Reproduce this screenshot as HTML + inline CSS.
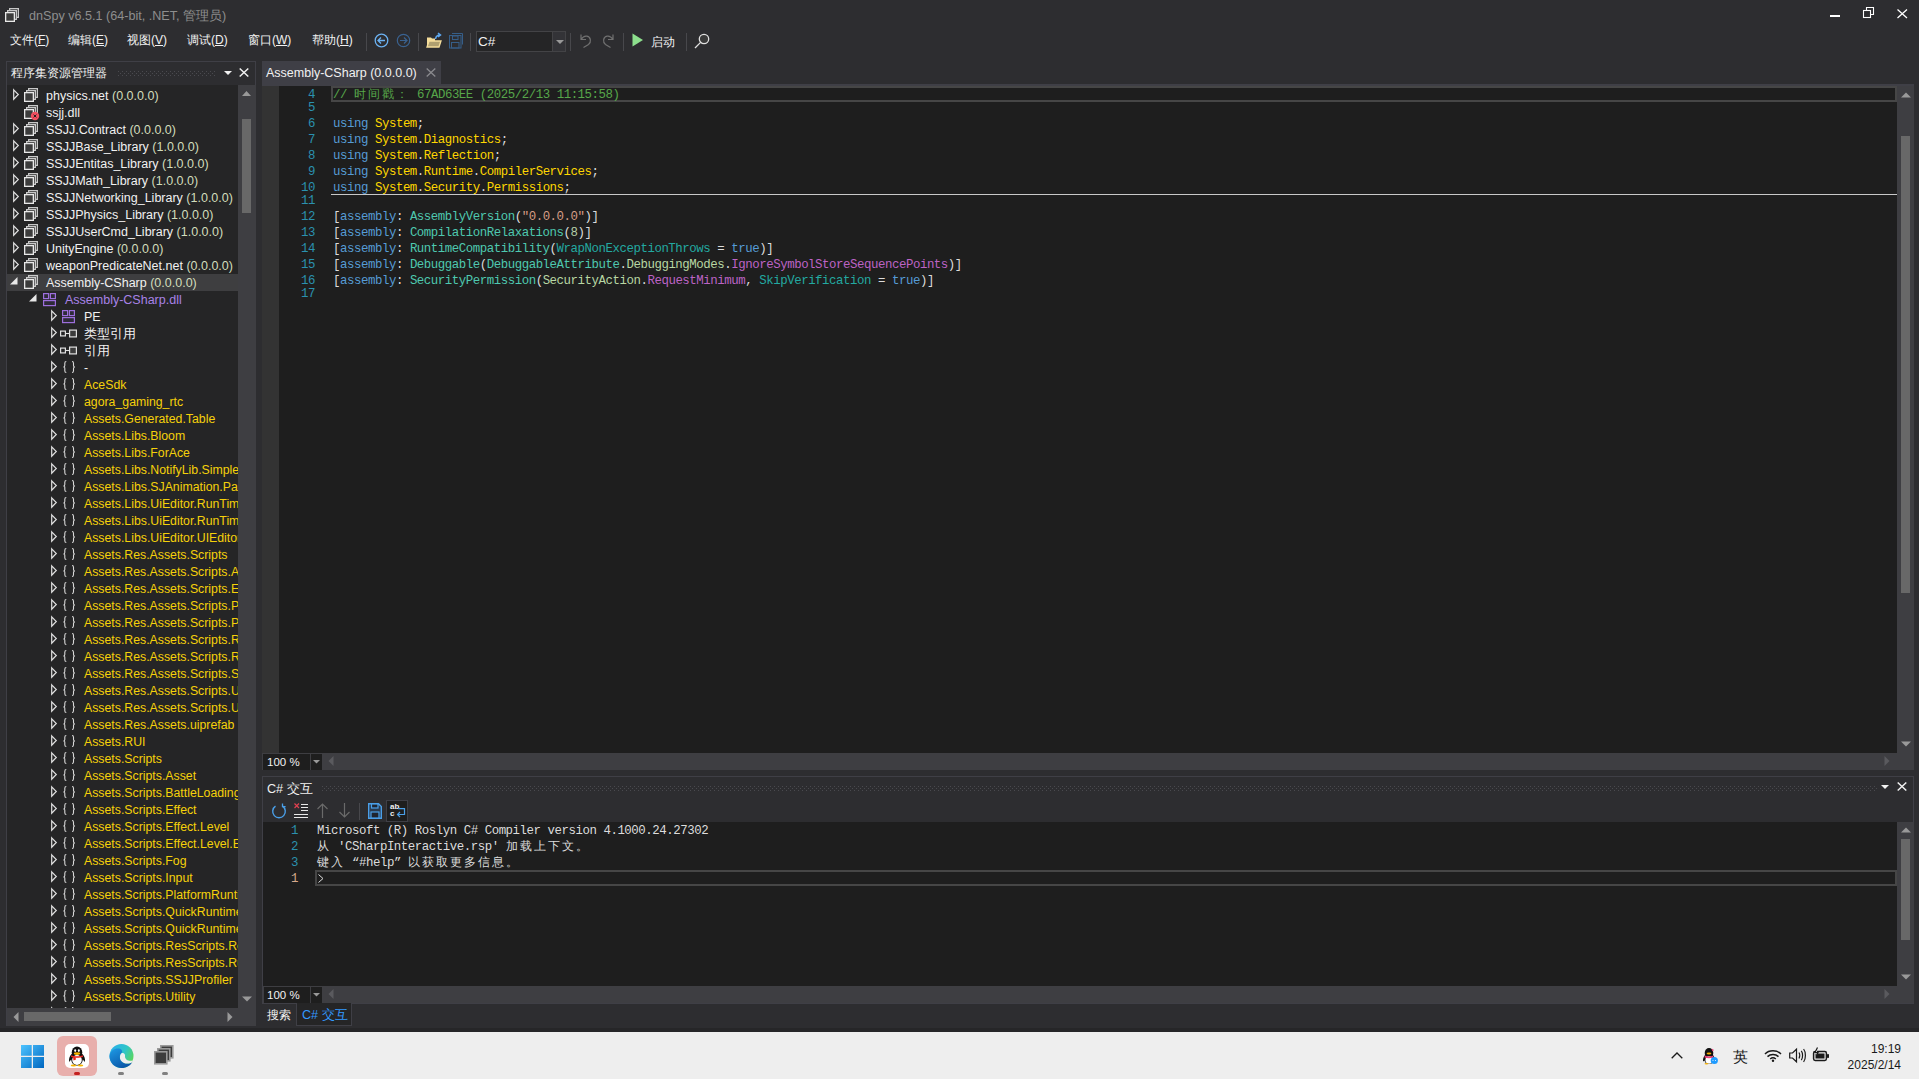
<!DOCTYPE html><html><head><meta charset="utf-8"><style>
*{margin:0;padding:0;box-sizing:border-box}
html,body{width:1919px;height:1079px;overflow:hidden;background:#2D2D30;font-family:"Liberation Sans",sans-serif;color:#F1F1F1}
.a{position:absolute}
.t{position:absolute;white-space:nowrap;font-size:12.4px;line-height:17px}
.m{font-family:"Liberation Mono",monospace;font-size:12.4px;letter-spacing:-0.45px;white-space:pre;position:absolute;line-height:16px;color:#DCDCDC}
.kw{color:#569CD6}.ns{color:#FFD700}.ty{color:#4EC9B0}.en{color:#B8D7A3}.lf{color:#BD63C5}.pr{color:#23A9A1}.st{color:#D69D85}.nm{color:#B5CEA8}.cm{color:#57A64A}
.ln{color:#2B91AF;position:absolute;font-family:"Liberation Mono",monospace;font-size:12.4px;letter-spacing:-0.45px;white-space:pre;line-height:16px;text-align:right}
.sb{background:#3E3E42}
.th{background:#686868}
svg{position:absolute;overflow:visible}
.tr{position:absolute;left:0;width:231px;height:17px}
</style></head><body>
<svg style="left:5px;top:8px;" width="14" height="14" viewBox="0 0 14 14"><rect x="4.65" y="0.65" width="8.7" height="8.7" fill="#2D2D30" stroke="#C8C8C8" stroke-width="1.3"/><rect x="2.65" y="2.65" width="8.7" height="8.7" fill="#2D2D30" stroke="#C8C8C8" stroke-width="1.3"/><rect x="0.65" y="4.65" width="8.7" height="8.7" fill="#3C3C3C" stroke="#E8E8E8" stroke-width="1.3"/></svg>
<div class="t" style="left:29px;top:7px;font-size:12.6px;color:#8E8E8E;line-height:18px">dnSpy v6.5.1 (64-bit, .NET, 管理员)</div>
<div class="a" style="left:1830px;top:15px;width:10px;height:2px;background:#FFFFFF;"></div>
<svg style="left:1863px;top:7px;" width="12" height="12" viewBox="0 0 12 12"><rect x="0.5" y="3.5" width="7" height="7" fill="none" stroke="#fff" stroke-width="1.1"/><path d="M3.5,3.5V0.5H10.5V7.5H7.5" fill="none" stroke="#fff" stroke-width="1.1"/></svg>
<svg style="left:1897px;top:9px;" width="11" height="10" viewBox="0 0 11 10"><path d="M0.5,0.5L10,9M10,0.5L0.5,9" stroke="#fff" stroke-width="1.3"/></svg>
<div class="t" style="left:10px;top:32px;font-size:12px;color:#F1F1F1;">文件(<u>F</u>)</div>
<div class="t" style="left:68px;top:32px;font-size:12px;color:#F1F1F1;">编辑(<u>E</u>)</div>
<div class="t" style="left:127px;top:32px;font-size:12px;color:#F1F1F1;">视图(<u>V</u>)</div>
<div class="t" style="left:187px;top:32px;font-size:12px;color:#F1F1F1;">调试(<u>D</u>)</div>
<div class="t" style="left:248px;top:32px;font-size:12px;color:#F1F1F1;">窗口(<u>W</u>)</div>
<div class="t" style="left:312px;top:32px;font-size:12px;color:#F1F1F1;">帮助(<u>H</u>)</div>
<div class="a" style="left:366px;top:33px;width:1px;height:18px;background:#48484C;"></div>
<div class="a" style="left:418px;top:33px;width:1px;height:18px;background:#48484C;"></div>
<div class="a" style="left:470px;top:33px;width:1px;height:18px;background:#48484C;"></div>
<div class="a" style="left:570px;top:33px;width:1px;height:18px;background:#48484C;"></div>
<div class="a" style="left:623px;top:33px;width:1px;height:18px;background:#48484C;"></div>
<div class="a" style="left:686px;top:33px;width:1px;height:18px;background:#48484C;"></div>
<svg style="left:374px;top:33px;" width="15" height="15" viewBox="0 0 15 15"><circle cx="7.5" cy="7.5" r="6.3" fill="none" stroke="#6CB2F2" stroke-width="1.3"/><path d="M4,7.5H11M7,4.5L4,7.5L7,10.5" fill="none" stroke="#6CB2F2" stroke-width="1.3"/></svg>
<svg style="left:396px;top:33px;" width="15" height="15" viewBox="0 0 15 15"><circle cx="7.5" cy="7.5" r="6.2" fill="none" stroke="#3A6290" stroke-width="1.2"/><path d="M4,7.5H11M8,4.5L11,7.5L8,10.5" fill="none" stroke="#3A6290" stroke-width="1.2"/></svg>
<svg style="left:426px;top:32px;" width="16" height="16" viewBox="0 0 16 16"><path d="M1,5.5H5L6,6.5H9V14.5H1Z" fill="#F5DD9A"/><path d="M3,9H15L13,15H1Z" fill="#B0A070" stroke="#F5DD9A" stroke-width="1.3"/><path d="M9.5,7C10,4 11.5,3 14,3M12,1L14.5,3L12,5" fill="none" stroke="#5EA8F0" stroke-width="1.5"/></svg>
<svg style="left:449px;top:33px;" width="15" height="16" viewBox="0 0 15 16"><path d="M3,0.5H13.5V11.5" fill="none" stroke="#365E88" stroke-width="1"/><rect x="0.5" y="2.5" width="11.5" height="12.5" fill="none" stroke="#365E88" stroke-width="1"/><rect x="3.5" y="3" width="5.5" height="3.5" fill="none" stroke="#365E88" stroke-width="1"/><rect x="2.5" y="9.5" width="7.5" height="5.5" fill="none" stroke="#365E88" stroke-width="1"/></svg>
<div class="a" style="left:476px;top:31px;width:90px;height:21px;background:#252526;border:1px solid #434346"></div>
<div class="a" style="left:553px;top:32px;width:12px;height:19px;background:#333337;"></div>
<div class="a" style="left:552px;top:32px;width:1px;height:19px;background:#434346;"></div>
<svg style="left:556px;top:40px;" width="8" height="5" viewBox="0 0 8 5"><path d="M0,0H8L4,4Z" fill="#999"/></svg>
<div class="t" style="left:478px;top:33px;font-size:13.5px;color:#F1F1F1;">C#</div>
<svg style="left:579px;top:33px;" width="14" height="15" viewBox="0 0 14 15"><path d="M2,1.5V6.5H7M2.2,6.3C4,3.5 6,2.7 8,3.2C12,4.2 12.5,9 9.5,11.5L4.5,14.5" fill="none" stroke="#707070" stroke-width="1.2"/></svg>
<svg style="left:601px;top:33px;" width="14" height="15" viewBox="0 0 14 15"><path d="M12,1.5V6.5H7M11.8,6.3C10,3.5 8,2.7 6,3.2C2,4.2 1.5,9 4.5,11.5L9.5,14.5" fill="none" stroke="#707070" stroke-width="1.2"/></svg>
<svg style="left:632px;top:33px;" width="12" height="14" viewBox="0 0 12 14"><path d="M0.5,0.5L11,7L0.5,13.5Z" fill="#8DDF8D"/></svg>
<div class="t" style="left:651px;top:34px;font-size:12.2px;color:#F1F1F1;">启动</div>
<svg style="left:694px;top:33px;" width="16" height="16" viewBox="0 0 16 16"><circle cx="10" cy="6" r="4.7" fill="#3A3A3A" stroke="#E0E0E0" stroke-width="1.3"/><path d="M6.6,9.4L1,15" stroke="#E0E0E0" stroke-width="1.3"/></svg>
<div class="a" style="left:6px;top:61px;width:250px;height:965px;background:#2D2D30;border:1px solid #3F3F46"></div>
<div class="t" style="left:11px;top:65px;font-size:12.2px;color:#F1F1F1;">程序集资源管理器</div>
<svg style="left:118px;top:71px" width="98" height="5"><defs><pattern id="g1" width="4" height="4" patternUnits="userSpaceOnUse"><rect x="0" y="0" width="1" height="1" fill="#4A4A4F"/><rect x="2" y="2" width="1" height="1" fill="#4A4A4F"/></pattern></defs><rect width="98" height="5" fill="url(#g1)"/></svg>
<svg style="left:224px;top:71px;" width="9" height="5" viewBox="0 0 9 5"><path d="M0,0H8L4,4Z" fill="#F1F1F1"/></svg>
<svg style="left:239px;top:68px;" width="10" height="9" viewBox="0 0 10 9"><path d="M0.7,0.5L9.3,8.5M9.3,0.5L0.7,8.5" stroke="#F1F1F1" stroke-width="1.5"/></svg>
<div class="a" style="left:7px;top:85px;width:231px;height:923px;background:#252526;overflow:hidden">
<svg style="left:6px;top:4px;" width="6" height="11" viewBox="0 0 6 11"><path d="M0.7,0.8L5.3,5.5L0.7,10.2Z" fill="none" stroke="#E0E0E0" stroke-width="1.2"/></svg>
<svg style="left:17px;top:3px" width="14" height="14" viewBox="0 0 14 14"><rect x="4.65" y="0.65" width="8.7" height="8.7" fill="#252526" stroke="#C8C8C8" stroke-width="1.3"/><rect x="2.65" y="2.65" width="8.7" height="8.7" fill="#252526" stroke="#C8C8C8" stroke-width="1.3"/><rect x="0.65" y="4.65" width="8.7" height="8.7" fill="#3C3C3C" stroke="#E8E8E8" stroke-width="1.3"/></svg>
<div class="t" style="left:39px;top:3px;color:#F1F1F1;font-size:12.5px">physics.net <span style="color:#D2DDBC">(0.0.0.0)</span></div>
<svg style="left:17px;top:20px" width="14" height="14" viewBox="0 0 14 14"><rect x="4.65" y="0.65" width="8.7" height="8.7" fill="#252526" stroke="#C8C8C8" stroke-width="1.3"/><rect x="2.65" y="2.65" width="8.7" height="8.7" fill="#252526" stroke="#C8C8C8" stroke-width="1.3"/><rect x="0.65" y="4.65" width="8.7" height="8.7" fill="#3C3C3C" stroke="#E8E8E8" stroke-width="1.3"/><circle cx="11" cy="11" r="4.2" fill="#F05060"/><path d="M9.6,9.6L12.4,12.4M12.4,9.6L9.6,12.4" stroke="#222" stroke-width="1"/></svg>
<div class="t" style="left:39px;top:20px;color:#F1F1F1;font-size:12.5px">ssjj.dll</div>
<svg style="left:6px;top:38px;" width="6" height="11" viewBox="0 0 6 11"><path d="M0.7,0.8L5.3,5.5L0.7,10.2Z" fill="none" stroke="#E0E0E0" stroke-width="1.2"/></svg>
<svg style="left:17px;top:37px" width="14" height="14" viewBox="0 0 14 14"><rect x="4.65" y="0.65" width="8.7" height="8.7" fill="#252526" stroke="#C8C8C8" stroke-width="1.3"/><rect x="2.65" y="2.65" width="8.7" height="8.7" fill="#252526" stroke="#C8C8C8" stroke-width="1.3"/><rect x="0.65" y="4.65" width="8.7" height="8.7" fill="#3C3C3C" stroke="#E8E8E8" stroke-width="1.3"/></svg>
<div class="t" style="left:39px;top:37px;color:#F1F1F1;font-size:12.5px">SSJJ.Contract <span style="color:#D2DDBC">(0.0.0.0)</span></div>
<svg style="left:6px;top:55px;" width="6" height="11" viewBox="0 0 6 11"><path d="M0.7,0.8L5.3,5.5L0.7,10.2Z" fill="none" stroke="#E0E0E0" stroke-width="1.2"/></svg>
<svg style="left:17px;top:54px" width="14" height="14" viewBox="0 0 14 14"><rect x="4.65" y="0.65" width="8.7" height="8.7" fill="#252526" stroke="#C8C8C8" stroke-width="1.3"/><rect x="2.65" y="2.65" width="8.7" height="8.7" fill="#252526" stroke="#C8C8C8" stroke-width="1.3"/><rect x="0.65" y="4.65" width="8.7" height="8.7" fill="#3C3C3C" stroke="#E8E8E8" stroke-width="1.3"/></svg>
<div class="t" style="left:39px;top:54px;color:#F1F1F1;font-size:12.5px">SSJJBase_Library <span style="color:#D2DDBC">(1.0.0.0)</span></div>
<svg style="left:6px;top:72px;" width="6" height="11" viewBox="0 0 6 11"><path d="M0.7,0.8L5.3,5.5L0.7,10.2Z" fill="none" stroke="#E0E0E0" stroke-width="1.2"/></svg>
<svg style="left:17px;top:71px" width="14" height="14" viewBox="0 0 14 14"><rect x="4.65" y="0.65" width="8.7" height="8.7" fill="#252526" stroke="#C8C8C8" stroke-width="1.3"/><rect x="2.65" y="2.65" width="8.7" height="8.7" fill="#252526" stroke="#C8C8C8" stroke-width="1.3"/><rect x="0.65" y="4.65" width="8.7" height="8.7" fill="#3C3C3C" stroke="#E8E8E8" stroke-width="1.3"/></svg>
<div class="t" style="left:39px;top:71px;color:#F1F1F1;font-size:12.5px">SSJJEntitas_Library <span style="color:#D2DDBC">(1.0.0.0)</span></div>
<svg style="left:6px;top:89px;" width="6" height="11" viewBox="0 0 6 11"><path d="M0.7,0.8L5.3,5.5L0.7,10.2Z" fill="none" stroke="#E0E0E0" stroke-width="1.2"/></svg>
<svg style="left:17px;top:88px" width="14" height="14" viewBox="0 0 14 14"><rect x="4.65" y="0.65" width="8.7" height="8.7" fill="#252526" stroke="#C8C8C8" stroke-width="1.3"/><rect x="2.65" y="2.65" width="8.7" height="8.7" fill="#252526" stroke="#C8C8C8" stroke-width="1.3"/><rect x="0.65" y="4.65" width="8.7" height="8.7" fill="#3C3C3C" stroke="#E8E8E8" stroke-width="1.3"/></svg>
<div class="t" style="left:39px;top:88px;color:#F1F1F1;font-size:12.5px">SSJJMath_Library <span style="color:#D2DDBC">(1.0.0.0)</span></div>
<svg style="left:6px;top:106px;" width="6" height="11" viewBox="0 0 6 11"><path d="M0.7,0.8L5.3,5.5L0.7,10.2Z" fill="none" stroke="#E0E0E0" stroke-width="1.2"/></svg>
<svg style="left:17px;top:105px" width="14" height="14" viewBox="0 0 14 14"><rect x="4.65" y="0.65" width="8.7" height="8.7" fill="#252526" stroke="#C8C8C8" stroke-width="1.3"/><rect x="2.65" y="2.65" width="8.7" height="8.7" fill="#252526" stroke="#C8C8C8" stroke-width="1.3"/><rect x="0.65" y="4.65" width="8.7" height="8.7" fill="#3C3C3C" stroke="#E8E8E8" stroke-width="1.3"/></svg>
<div class="t" style="left:39px;top:105px;color:#F1F1F1;font-size:12.5px">SSJJNetworking_Library <span style="color:#D2DDBC">(1.0.0.0)</span></div>
<svg style="left:6px;top:123px;" width="6" height="11" viewBox="0 0 6 11"><path d="M0.7,0.8L5.3,5.5L0.7,10.2Z" fill="none" stroke="#E0E0E0" stroke-width="1.2"/></svg>
<svg style="left:17px;top:122px" width="14" height="14" viewBox="0 0 14 14"><rect x="4.65" y="0.65" width="8.7" height="8.7" fill="#252526" stroke="#C8C8C8" stroke-width="1.3"/><rect x="2.65" y="2.65" width="8.7" height="8.7" fill="#252526" stroke="#C8C8C8" stroke-width="1.3"/><rect x="0.65" y="4.65" width="8.7" height="8.7" fill="#3C3C3C" stroke="#E8E8E8" stroke-width="1.3"/></svg>
<div class="t" style="left:39px;top:122px;color:#F1F1F1;font-size:12.5px">SSJJPhysics_Library <span style="color:#D2DDBC">(1.0.0.0)</span></div>
<svg style="left:6px;top:140px;" width="6" height="11" viewBox="0 0 6 11"><path d="M0.7,0.8L5.3,5.5L0.7,10.2Z" fill="none" stroke="#E0E0E0" stroke-width="1.2"/></svg>
<svg style="left:17px;top:139px" width="14" height="14" viewBox="0 0 14 14"><rect x="4.65" y="0.65" width="8.7" height="8.7" fill="#252526" stroke="#C8C8C8" stroke-width="1.3"/><rect x="2.65" y="2.65" width="8.7" height="8.7" fill="#252526" stroke="#C8C8C8" stroke-width="1.3"/><rect x="0.65" y="4.65" width="8.7" height="8.7" fill="#3C3C3C" stroke="#E8E8E8" stroke-width="1.3"/></svg>
<div class="t" style="left:39px;top:139px;color:#F1F1F1;font-size:12.5px">SSJJUserCmd_Library <span style="color:#D2DDBC">(1.0.0.0)</span></div>
<svg style="left:6px;top:157px;" width="6" height="11" viewBox="0 0 6 11"><path d="M0.7,0.8L5.3,5.5L0.7,10.2Z" fill="none" stroke="#E0E0E0" stroke-width="1.2"/></svg>
<svg style="left:17px;top:156px" width="14" height="14" viewBox="0 0 14 14"><rect x="4.65" y="0.65" width="8.7" height="8.7" fill="#252526" stroke="#C8C8C8" stroke-width="1.3"/><rect x="2.65" y="2.65" width="8.7" height="8.7" fill="#252526" stroke="#C8C8C8" stroke-width="1.3"/><rect x="0.65" y="4.65" width="8.7" height="8.7" fill="#3C3C3C" stroke="#E8E8E8" stroke-width="1.3"/></svg>
<div class="t" style="left:39px;top:156px;color:#F1F1F1;font-size:12.5px">UnityEngine <span style="color:#D2DDBC">(0.0.0.0)</span></div>
<svg style="left:6px;top:174px;" width="6" height="11" viewBox="0 0 6 11"><path d="M0.7,0.8L5.3,5.5L0.7,10.2Z" fill="none" stroke="#E0E0E0" stroke-width="1.2"/></svg>
<svg style="left:17px;top:173px" width="14" height="14" viewBox="0 0 14 14"><rect x="4.65" y="0.65" width="8.7" height="8.7" fill="#252526" stroke="#C8C8C8" stroke-width="1.3"/><rect x="2.65" y="2.65" width="8.7" height="8.7" fill="#252526" stroke="#C8C8C8" stroke-width="1.3"/><rect x="0.65" y="4.65" width="8.7" height="8.7" fill="#3C3C3C" stroke="#E8E8E8" stroke-width="1.3"/></svg>
<div class="t" style="left:39px;top:173px;color:#F1F1F1;font-size:12.5px">weaponPredicateNet.net <span style="color:#D2DDBC">(0.0.0.0)</span></div>
<div class="a" style="left:0;top:189px;width:231px;height:17px;background:#3E3E40"></div>
<svg style="left:3px;top:192px;" width="8" height="8" viewBox="0 0 8 8"><path d="M0,7.5L7.5,0V7.5Z" fill="#E8E8E8"/></svg>
<svg style="left:17px;top:190px" width="14" height="14" viewBox="0 0 14 14"><rect x="4.65" y="0.65" width="8.7" height="8.7" fill="#3E3E40" stroke="#C8C8C8" stroke-width="1.3"/><rect x="2.65" y="2.65" width="8.7" height="8.7" fill="#3E3E40" stroke="#C8C8C8" stroke-width="1.3"/><rect x="0.65" y="4.65" width="8.7" height="8.7" fill="#3C3C3C" stroke="#E8E8E8" stroke-width="1.3"/></svg>
<div class="t" style="left:39px;top:190px;color:#F1F1F1;font-size:12.5px">Assembly-CSharp <span style="color:#D2DDBC">(0.0.0.0)</span></div>
<svg style="left:22px;top:209px;" width="8" height="8" viewBox="0 0 8 8"><path d="M0,7.5L7.5,0V7.5Z" fill="#E8E8E8"/></svg>
<svg style="left:36px;top:208px;" width="14" height="14" viewBox="0 0 14 14"><rect x="0.6" y="0.6" width="5" height="5" fill="#2E2A38" stroke="#9D6FDC" stroke-width="1.2"/><rect x="7.4" y="0.6" width="5" height="5" fill="#2E2A38" stroke="#9D6FDC" stroke-width="1.2"/><rect x="0.6" y="7.6" width="11.8" height="5" fill="#2E2A38" stroke="#9D6FDC" stroke-width="1.2"/></svg>
<div class="t" style="left:58px;top:207px;color:#A882E6;font-size:12.5px">Assembly-CSharp.dll</div>
<svg style="left:44px;top:225px;" width="6" height="11" viewBox="0 0 6 11"><path d="M0.7,0.8L5.3,5.5L0.7,10.2Z" fill="none" stroke="#E0E0E0" stroke-width="1.2"/></svg>
<svg style="left:55px;top:225px;" width="14" height="14" viewBox="0 0 14 14"><rect x="0.6" y="0.6" width="5" height="5" fill="#2E2A38" stroke="#9D6FDC" stroke-width="1.2"/><rect x="7.4" y="0.6" width="5" height="5" fill="#2E2A38" stroke="#9D6FDC" stroke-width="1.2"/><rect x="0.6" y="7.6" width="11.8" height="5" fill="#2E2A38" stroke="#9D6FDC" stroke-width="1.2"/></svg>
<div class="t" style="left:77px;top:224px;color:#F1F1F1;font-size:12.5px">PE</div>
<svg style="left:44px;top:242px;" width="6" height="11" viewBox="0 0 6 11"><path d="M0.7,0.8L5.3,5.5L0.7,10.2Z" fill="none" stroke="#E0E0E0" stroke-width="1.2"/></svg>
<svg style="left:53px;top:244px;" width="17" height="9" viewBox="0 0 17 9"><rect x="0.6" y="2.1" width="4.8" height="4.8" fill="none" stroke="#E0E0E0" stroke-width="1.2"/><path d="M5.4,4.5H9.6" stroke="#E0E0E0" stroke-width="1.1"/><rect x="9.6" y="1.1" width="6.8" height="6.8" fill="#3C3C3C" stroke="#E0E0E0" stroke-width="1.2"/></svg>
<div class="t" style="left:77px;top:241px;color:#F1F1F1;font-size:12.5px">类型引用</div>
<svg style="left:44px;top:259px;" width="6" height="11" viewBox="0 0 6 11"><path d="M0.7,0.8L5.3,5.5L0.7,10.2Z" fill="none" stroke="#E0E0E0" stroke-width="1.2"/></svg>
<svg style="left:53px;top:261px;" width="17" height="9" viewBox="0 0 17 9"><rect x="0.6" y="2.1" width="4.8" height="4.8" fill="none" stroke="#E0E0E0" stroke-width="1.2"/><path d="M5.4,4.5H9.6" stroke="#E0E0E0" stroke-width="1.1"/><rect x="9.6" y="1.1" width="6.8" height="6.8" fill="#3C3C3C" stroke="#E0E0E0" stroke-width="1.2"/></svg>
<div class="t" style="left:77px;top:258px;color:#F1F1F1;font-size:12.5px">引用</div>
<svg style="left:44px;top:276px;" width="6" height="11" viewBox="0 0 6 11"><path d="M0.7,0.8L5.3,5.5L0.7,10.2Z" fill="none" stroke="#E0E0E0" stroke-width="1.2"/></svg>
<svg style="left:56px;top:276px;" width="13" height="12" viewBox="0 0 13 12"><path d="M3.3,0.5C2.2,0.5 1.8,1 1.8,2.3V4.6C1.8,5.5 1.3,6 0.4,6C1.3,6 1.8,6.5 1.8,7.4V9.7C1.8,11 2.2,11.5 3.3,11.5" fill="none" stroke="#D8D8D8" stroke-width="1.1"/><path d="M9,0.5C10.1,0.5 10.5,1 10.5,2.3V4.6C10.5,5.5 11,6 11.9,6C11,6 10.5,6.5 10.5,7.4V9.7C10.5,11 10.1,11.5 9,11.5" fill="none" stroke="#D8D8D8" stroke-width="1.1"/></svg>
<div class="t" style="left:77px;top:275px;color:#F1F1F1;font-size:12.3px">-</div>
<svg style="left:44px;top:293px;" width="6" height="11" viewBox="0 0 6 11"><path d="M0.7,0.8L5.3,5.5L0.7,10.2Z" fill="none" stroke="#E0E0E0" stroke-width="1.2"/></svg>
<svg style="left:56px;top:293px;" width="13" height="12" viewBox="0 0 13 12"><path d="M3.3,0.5C2.2,0.5 1.8,1 1.8,2.3V4.6C1.8,5.5 1.3,6 0.4,6C1.3,6 1.8,6.5 1.8,7.4V9.7C1.8,11 2.2,11.5 3.3,11.5" fill="none" stroke="#D8D8D8" stroke-width="1.1"/><path d="M9,0.5C10.1,0.5 10.5,1 10.5,2.3V4.6C10.5,5.5 11,6 11.9,6C11,6 10.5,6.5 10.5,7.4V9.7C10.5,11 10.1,11.5 9,11.5" fill="none" stroke="#D8D8D8" stroke-width="1.1"/></svg>
<div class="t" style="left:77px;top:292px;color:#F5D10A;font-size:12.3px">AceSdk</div>
<svg style="left:44px;top:310px;" width="6" height="11" viewBox="0 0 6 11"><path d="M0.7,0.8L5.3,5.5L0.7,10.2Z" fill="none" stroke="#E0E0E0" stroke-width="1.2"/></svg>
<svg style="left:56px;top:310px;" width="13" height="12" viewBox="0 0 13 12"><path d="M3.3,0.5C2.2,0.5 1.8,1 1.8,2.3V4.6C1.8,5.5 1.3,6 0.4,6C1.3,6 1.8,6.5 1.8,7.4V9.7C1.8,11 2.2,11.5 3.3,11.5" fill="none" stroke="#D8D8D8" stroke-width="1.1"/><path d="M9,0.5C10.1,0.5 10.5,1 10.5,2.3V4.6C10.5,5.5 11,6 11.9,6C11,6 10.5,6.5 10.5,7.4V9.7C10.5,11 10.1,11.5 9,11.5" fill="none" stroke="#D8D8D8" stroke-width="1.1"/></svg>
<div class="t" style="left:77px;top:309px;color:#F5D10A;font-size:12.3px">agora_gaming_rtc</div>
<svg style="left:44px;top:327px;" width="6" height="11" viewBox="0 0 6 11"><path d="M0.7,0.8L5.3,5.5L0.7,10.2Z" fill="none" stroke="#E0E0E0" stroke-width="1.2"/></svg>
<svg style="left:56px;top:327px;" width="13" height="12" viewBox="0 0 13 12"><path d="M3.3,0.5C2.2,0.5 1.8,1 1.8,2.3V4.6C1.8,5.5 1.3,6 0.4,6C1.3,6 1.8,6.5 1.8,7.4V9.7C1.8,11 2.2,11.5 3.3,11.5" fill="none" stroke="#D8D8D8" stroke-width="1.1"/><path d="M9,0.5C10.1,0.5 10.5,1 10.5,2.3V4.6C10.5,5.5 11,6 11.9,6C11,6 10.5,6.5 10.5,7.4V9.7C10.5,11 10.1,11.5 9,11.5" fill="none" stroke="#D8D8D8" stroke-width="1.1"/></svg>
<div class="t" style="left:77px;top:326px;color:#F5D10A;font-size:12.3px">Assets.Generated.Table</div>
<svg style="left:44px;top:344px;" width="6" height="11" viewBox="0 0 6 11"><path d="M0.7,0.8L5.3,5.5L0.7,10.2Z" fill="none" stroke="#E0E0E0" stroke-width="1.2"/></svg>
<svg style="left:56px;top:344px;" width="13" height="12" viewBox="0 0 13 12"><path d="M3.3,0.5C2.2,0.5 1.8,1 1.8,2.3V4.6C1.8,5.5 1.3,6 0.4,6C1.3,6 1.8,6.5 1.8,7.4V9.7C1.8,11 2.2,11.5 3.3,11.5" fill="none" stroke="#D8D8D8" stroke-width="1.1"/><path d="M9,0.5C10.1,0.5 10.5,1 10.5,2.3V4.6C10.5,5.5 11,6 11.9,6C11,6 10.5,6.5 10.5,7.4V9.7C10.5,11 10.1,11.5 9,11.5" fill="none" stroke="#D8D8D8" stroke-width="1.1"/></svg>
<div class="t" style="left:77px;top:343px;color:#F5D10A;font-size:12.3px">Assets.Libs.Bloom</div>
<svg style="left:44px;top:361px;" width="6" height="11" viewBox="0 0 6 11"><path d="M0.7,0.8L5.3,5.5L0.7,10.2Z" fill="none" stroke="#E0E0E0" stroke-width="1.2"/></svg>
<svg style="left:56px;top:361px;" width="13" height="12" viewBox="0 0 13 12"><path d="M3.3,0.5C2.2,0.5 1.8,1 1.8,2.3V4.6C1.8,5.5 1.3,6 0.4,6C1.3,6 1.8,6.5 1.8,7.4V9.7C1.8,11 2.2,11.5 3.3,11.5" fill="none" stroke="#D8D8D8" stroke-width="1.1"/><path d="M9,0.5C10.1,0.5 10.5,1 10.5,2.3V4.6C10.5,5.5 11,6 11.9,6C11,6 10.5,6.5 10.5,7.4V9.7C10.5,11 10.1,11.5 9,11.5" fill="none" stroke="#D8D8D8" stroke-width="1.1"/></svg>
<div class="t" style="left:77px;top:360px;color:#F5D10A;font-size:12.3px">Assets.Libs.ForAce</div>
<svg style="left:44px;top:378px;" width="6" height="11" viewBox="0 0 6 11"><path d="M0.7,0.8L5.3,5.5L0.7,10.2Z" fill="none" stroke="#E0E0E0" stroke-width="1.2"/></svg>
<svg style="left:56px;top:378px;" width="13" height="12" viewBox="0 0 13 12"><path d="M3.3,0.5C2.2,0.5 1.8,1 1.8,2.3V4.6C1.8,5.5 1.3,6 0.4,6C1.3,6 1.8,6.5 1.8,7.4V9.7C1.8,11 2.2,11.5 3.3,11.5" fill="none" stroke="#D8D8D8" stroke-width="1.1"/><path d="M9,0.5C10.1,0.5 10.5,1 10.5,2.3V4.6C10.5,5.5 11,6 11.9,6C11,6 10.5,6.5 10.5,7.4V9.7C10.5,11 10.1,11.5 9,11.5" fill="none" stroke="#D8D8D8" stroke-width="1.1"/></svg>
<div class="t" style="left:77px;top:377px;color:#F5D10A;font-size:12.3px">Assets.Libs.NotifyLib.SimpleNotify</div>
<svg style="left:44px;top:395px;" width="6" height="11" viewBox="0 0 6 11"><path d="M0.7,0.8L5.3,5.5L0.7,10.2Z" fill="none" stroke="#E0E0E0" stroke-width="1.2"/></svg>
<svg style="left:56px;top:395px;" width="13" height="12" viewBox="0 0 13 12"><path d="M3.3,0.5C2.2,0.5 1.8,1 1.8,2.3V4.6C1.8,5.5 1.3,6 0.4,6C1.3,6 1.8,6.5 1.8,7.4V9.7C1.8,11 2.2,11.5 3.3,11.5" fill="none" stroke="#D8D8D8" stroke-width="1.1"/><path d="M9,0.5C10.1,0.5 10.5,1 10.5,2.3V4.6C10.5,5.5 11,6 11.9,6C11,6 10.5,6.5 10.5,7.4V9.7C10.5,11 10.1,11.5 9,11.5" fill="none" stroke="#D8D8D8" stroke-width="1.1"/></svg>
<div class="t" style="left:77px;top:394px;color:#F5D10A;font-size:12.3px">Assets.Libs.SJAnimation.Params</div>
<svg style="left:44px;top:412px;" width="6" height="11" viewBox="0 0 6 11"><path d="M0.7,0.8L5.3,5.5L0.7,10.2Z" fill="none" stroke="#E0E0E0" stroke-width="1.2"/></svg>
<svg style="left:56px;top:412px;" width="13" height="12" viewBox="0 0 13 12"><path d="M3.3,0.5C2.2,0.5 1.8,1 1.8,2.3V4.6C1.8,5.5 1.3,6 0.4,6C1.3,6 1.8,6.5 1.8,7.4V9.7C1.8,11 2.2,11.5 3.3,11.5" fill="none" stroke="#D8D8D8" stroke-width="1.1"/><path d="M9,0.5C10.1,0.5 10.5,1 10.5,2.3V4.6C10.5,5.5 11,6 11.9,6C11,6 10.5,6.5 10.5,7.4V9.7C10.5,11 10.1,11.5 9,11.5" fill="none" stroke="#D8D8D8" stroke-width="1.1"/></svg>
<div class="t" style="left:77px;top:411px;color:#F5D10A;font-size:12.3px">Assets.Libs.UiEditor.RunTime</div>
<svg style="left:44px;top:429px;" width="6" height="11" viewBox="0 0 6 11"><path d="M0.7,0.8L5.3,5.5L0.7,10.2Z" fill="none" stroke="#E0E0E0" stroke-width="1.2"/></svg>
<svg style="left:56px;top:429px;" width="13" height="12" viewBox="0 0 13 12"><path d="M3.3,0.5C2.2,0.5 1.8,1 1.8,2.3V4.6C1.8,5.5 1.3,6 0.4,6C1.3,6 1.8,6.5 1.8,7.4V9.7C1.8,11 2.2,11.5 3.3,11.5" fill="none" stroke="#D8D8D8" stroke-width="1.1"/><path d="M9,0.5C10.1,0.5 10.5,1 10.5,2.3V4.6C10.5,5.5 11,6 11.9,6C11,6 10.5,6.5 10.5,7.4V9.7C10.5,11 10.1,11.5 9,11.5" fill="none" stroke="#D8D8D8" stroke-width="1.1"/></svg>
<div class="t" style="left:77px;top:428px;color:#F5D10A;font-size:12.3px">Assets.Libs.UiEditor.RunTime2</div>
<svg style="left:44px;top:446px;" width="6" height="11" viewBox="0 0 6 11"><path d="M0.7,0.8L5.3,5.5L0.7,10.2Z" fill="none" stroke="#E0E0E0" stroke-width="1.2"/></svg>
<svg style="left:56px;top:446px;" width="13" height="12" viewBox="0 0 13 12"><path d="M3.3,0.5C2.2,0.5 1.8,1 1.8,2.3V4.6C1.8,5.5 1.3,6 0.4,6C1.3,6 1.8,6.5 1.8,7.4V9.7C1.8,11 2.2,11.5 3.3,11.5" fill="none" stroke="#D8D8D8" stroke-width="1.1"/><path d="M9,0.5C10.1,0.5 10.5,1 10.5,2.3V4.6C10.5,5.5 11,6 11.9,6C11,6 10.5,6.5 10.5,7.4V9.7C10.5,11 10.1,11.5 9,11.5" fill="none" stroke="#D8D8D8" stroke-width="1.1"/></svg>
<div class="t" style="left:77px;top:445px;color:#F5D10A;font-size:12.3px">Assets.Libs.UiEditor.UIEditor</div>
<svg style="left:44px;top:463px;" width="6" height="11" viewBox="0 0 6 11"><path d="M0.7,0.8L5.3,5.5L0.7,10.2Z" fill="none" stroke="#E0E0E0" stroke-width="1.2"/></svg>
<svg style="left:56px;top:463px;" width="13" height="12" viewBox="0 0 13 12"><path d="M3.3,0.5C2.2,0.5 1.8,1 1.8,2.3V4.6C1.8,5.5 1.3,6 0.4,6C1.3,6 1.8,6.5 1.8,7.4V9.7C1.8,11 2.2,11.5 3.3,11.5" fill="none" stroke="#D8D8D8" stroke-width="1.1"/><path d="M9,0.5C10.1,0.5 10.5,1 10.5,2.3V4.6C10.5,5.5 11,6 11.9,6C11,6 10.5,6.5 10.5,7.4V9.7C10.5,11 10.1,11.5 9,11.5" fill="none" stroke="#D8D8D8" stroke-width="1.1"/></svg>
<div class="t" style="left:77px;top:462px;color:#F5D10A;font-size:12.3px">Assets.Res.Assets.Scripts</div>
<svg style="left:44px;top:480px;" width="6" height="11" viewBox="0 0 6 11"><path d="M0.7,0.8L5.3,5.5L0.7,10.2Z" fill="none" stroke="#E0E0E0" stroke-width="1.2"/></svg>
<svg style="left:56px;top:480px;" width="13" height="12" viewBox="0 0 13 12"><path d="M3.3,0.5C2.2,0.5 1.8,1 1.8,2.3V4.6C1.8,5.5 1.3,6 0.4,6C1.3,6 1.8,6.5 1.8,7.4V9.7C1.8,11 2.2,11.5 3.3,11.5" fill="none" stroke="#D8D8D8" stroke-width="1.1"/><path d="M9,0.5C10.1,0.5 10.5,1 10.5,2.3V4.6C10.5,5.5 11,6 11.9,6C11,6 10.5,6.5 10.5,7.4V9.7C10.5,11 10.1,11.5 9,11.5" fill="none" stroke="#D8D8D8" stroke-width="1.1"/></svg>
<div class="t" style="left:77px;top:479px;color:#F5D10A;font-size:12.3px">Assets.Res.Assets.Scripts.Asset</div>
<svg style="left:44px;top:497px;" width="6" height="11" viewBox="0 0 6 11"><path d="M0.7,0.8L5.3,5.5L0.7,10.2Z" fill="none" stroke="#E0E0E0" stroke-width="1.2"/></svg>
<svg style="left:56px;top:497px;" width="13" height="12" viewBox="0 0 13 12"><path d="M3.3,0.5C2.2,0.5 1.8,1 1.8,2.3V4.6C1.8,5.5 1.3,6 0.4,6C1.3,6 1.8,6.5 1.8,7.4V9.7C1.8,11 2.2,11.5 3.3,11.5" fill="none" stroke="#D8D8D8" stroke-width="1.1"/><path d="M9,0.5C10.1,0.5 10.5,1 10.5,2.3V4.6C10.5,5.5 11,6 11.9,6C11,6 10.5,6.5 10.5,7.4V9.7C10.5,11 10.1,11.5 9,11.5" fill="none" stroke="#D8D8D8" stroke-width="1.1"/></svg>
<div class="t" style="left:77px;top:496px;color:#F5D10A;font-size:12.3px">Assets.Res.Assets.Scripts.Effect</div>
<svg style="left:44px;top:514px;" width="6" height="11" viewBox="0 0 6 11"><path d="M0.7,0.8L5.3,5.5L0.7,10.2Z" fill="none" stroke="#E0E0E0" stroke-width="1.2"/></svg>
<svg style="left:56px;top:514px;" width="13" height="12" viewBox="0 0 13 12"><path d="M3.3,0.5C2.2,0.5 1.8,1 1.8,2.3V4.6C1.8,5.5 1.3,6 0.4,6C1.3,6 1.8,6.5 1.8,7.4V9.7C1.8,11 2.2,11.5 3.3,11.5" fill="none" stroke="#D8D8D8" stroke-width="1.1"/><path d="M9,0.5C10.1,0.5 10.5,1 10.5,2.3V4.6C10.5,5.5 11,6 11.9,6C11,6 10.5,6.5 10.5,7.4V9.7C10.5,11 10.1,11.5 9,11.5" fill="none" stroke="#D8D8D8" stroke-width="1.1"/></svg>
<div class="t" style="left:77px;top:513px;color:#F5D10A;font-size:12.3px">Assets.Res.Assets.Scripts.Player</div>
<svg style="left:44px;top:531px;" width="6" height="11" viewBox="0 0 6 11"><path d="M0.7,0.8L5.3,5.5L0.7,10.2Z" fill="none" stroke="#E0E0E0" stroke-width="1.2"/></svg>
<svg style="left:56px;top:531px;" width="13" height="12" viewBox="0 0 13 12"><path d="M3.3,0.5C2.2,0.5 1.8,1 1.8,2.3V4.6C1.8,5.5 1.3,6 0.4,6C1.3,6 1.8,6.5 1.8,7.4V9.7C1.8,11 2.2,11.5 3.3,11.5" fill="none" stroke="#D8D8D8" stroke-width="1.1"/><path d="M9,0.5C10.1,0.5 10.5,1 10.5,2.3V4.6C10.5,5.5 11,6 11.9,6C11,6 10.5,6.5 10.5,7.4V9.7C10.5,11 10.1,11.5 9,11.5" fill="none" stroke="#D8D8D8" stroke-width="1.1"/></svg>
<div class="t" style="left:77px;top:530px;color:#F5D10A;font-size:12.3px">Assets.Res.Assets.Scripts.Platform</div>
<svg style="left:44px;top:548px;" width="6" height="11" viewBox="0 0 6 11"><path d="M0.7,0.8L5.3,5.5L0.7,10.2Z" fill="none" stroke="#E0E0E0" stroke-width="1.2"/></svg>
<svg style="left:56px;top:548px;" width="13" height="12" viewBox="0 0 13 12"><path d="M3.3,0.5C2.2,0.5 1.8,1 1.8,2.3V4.6C1.8,5.5 1.3,6 0.4,6C1.3,6 1.8,6.5 1.8,7.4V9.7C1.8,11 2.2,11.5 3.3,11.5" fill="none" stroke="#D8D8D8" stroke-width="1.1"/><path d="M9,0.5C10.1,0.5 10.5,1 10.5,2.3V4.6C10.5,5.5 11,6 11.9,6C11,6 10.5,6.5 10.5,7.4V9.7C10.5,11 10.1,11.5 9,11.5" fill="none" stroke="#D8D8D8" stroke-width="1.1"/></svg>
<div class="t" style="left:77px;top:547px;color:#F5D10A;font-size:12.3px">Assets.Res.Assets.Scripts.Res</div>
<svg style="left:44px;top:565px;" width="6" height="11" viewBox="0 0 6 11"><path d="M0.7,0.8L5.3,5.5L0.7,10.2Z" fill="none" stroke="#E0E0E0" stroke-width="1.2"/></svg>
<svg style="left:56px;top:565px;" width="13" height="12" viewBox="0 0 13 12"><path d="M3.3,0.5C2.2,0.5 1.8,1 1.8,2.3V4.6C1.8,5.5 1.3,6 0.4,6C1.3,6 1.8,6.5 1.8,7.4V9.7C1.8,11 2.2,11.5 3.3,11.5" fill="none" stroke="#D8D8D8" stroke-width="1.1"/><path d="M9,0.5C10.1,0.5 10.5,1 10.5,2.3V4.6C10.5,5.5 11,6 11.9,6C11,6 10.5,6.5 10.5,7.4V9.7C10.5,11 10.1,11.5 9,11.5" fill="none" stroke="#D8D8D8" stroke-width="1.1"/></svg>
<div class="t" style="left:77px;top:564px;color:#F5D10A;font-size:12.3px">Assets.Res.Assets.Scripts.Rule</div>
<svg style="left:44px;top:582px;" width="6" height="11" viewBox="0 0 6 11"><path d="M0.7,0.8L5.3,5.5L0.7,10.2Z" fill="none" stroke="#E0E0E0" stroke-width="1.2"/></svg>
<svg style="left:56px;top:582px;" width="13" height="12" viewBox="0 0 13 12"><path d="M3.3,0.5C2.2,0.5 1.8,1 1.8,2.3V4.6C1.8,5.5 1.3,6 0.4,6C1.3,6 1.8,6.5 1.8,7.4V9.7C1.8,11 2.2,11.5 3.3,11.5" fill="none" stroke="#D8D8D8" stroke-width="1.1"/><path d="M9,0.5C10.1,0.5 10.5,1 10.5,2.3V4.6C10.5,5.5 11,6 11.9,6C11,6 10.5,6.5 10.5,7.4V9.7C10.5,11 10.1,11.5 9,11.5" fill="none" stroke="#D8D8D8" stroke-width="1.1"/></svg>
<div class="t" style="left:77px;top:581px;color:#F5D10A;font-size:12.3px">Assets.Res.Assets.Scripts.Scene</div>
<svg style="left:44px;top:599px;" width="6" height="11" viewBox="0 0 6 11"><path d="M0.7,0.8L5.3,5.5L0.7,10.2Z" fill="none" stroke="#E0E0E0" stroke-width="1.2"/></svg>
<svg style="left:56px;top:599px;" width="13" height="12" viewBox="0 0 13 12"><path d="M3.3,0.5C2.2,0.5 1.8,1 1.8,2.3V4.6C1.8,5.5 1.3,6 0.4,6C1.3,6 1.8,6.5 1.8,7.4V9.7C1.8,11 2.2,11.5 3.3,11.5" fill="none" stroke="#D8D8D8" stroke-width="1.1"/><path d="M9,0.5C10.1,0.5 10.5,1 10.5,2.3V4.6C10.5,5.5 11,6 11.9,6C11,6 10.5,6.5 10.5,7.4V9.7C10.5,11 10.1,11.5 9,11.5" fill="none" stroke="#D8D8D8" stroke-width="1.1"/></svg>
<div class="t" style="left:77px;top:598px;color:#F5D10A;font-size:12.3px">Assets.Res.Assets.Scripts.UI</div>
<svg style="left:44px;top:616px;" width="6" height="11" viewBox="0 0 6 11"><path d="M0.7,0.8L5.3,5.5L0.7,10.2Z" fill="none" stroke="#E0E0E0" stroke-width="1.2"/></svg>
<svg style="left:56px;top:616px;" width="13" height="12" viewBox="0 0 13 12"><path d="M3.3,0.5C2.2,0.5 1.8,1 1.8,2.3V4.6C1.8,5.5 1.3,6 0.4,6C1.3,6 1.8,6.5 1.8,7.4V9.7C1.8,11 2.2,11.5 3.3,11.5" fill="none" stroke="#D8D8D8" stroke-width="1.1"/><path d="M9,0.5C10.1,0.5 10.5,1 10.5,2.3V4.6C10.5,5.5 11,6 11.9,6C11,6 10.5,6.5 10.5,7.4V9.7C10.5,11 10.1,11.5 9,11.5" fill="none" stroke="#D8D8D8" stroke-width="1.1"/></svg>
<div class="t" style="left:77px;top:615px;color:#F5D10A;font-size:12.3px">Assets.Res.Assets.Scripts.Util</div>
<svg style="left:44px;top:633px;" width="6" height="11" viewBox="0 0 6 11"><path d="M0.7,0.8L5.3,5.5L0.7,10.2Z" fill="none" stroke="#E0E0E0" stroke-width="1.2"/></svg>
<svg style="left:56px;top:633px;" width="13" height="12" viewBox="0 0 13 12"><path d="M3.3,0.5C2.2,0.5 1.8,1 1.8,2.3V4.6C1.8,5.5 1.3,6 0.4,6C1.3,6 1.8,6.5 1.8,7.4V9.7C1.8,11 2.2,11.5 3.3,11.5" fill="none" stroke="#D8D8D8" stroke-width="1.1"/><path d="M9,0.5C10.1,0.5 10.5,1 10.5,2.3V4.6C10.5,5.5 11,6 11.9,6C11,6 10.5,6.5 10.5,7.4V9.7C10.5,11 10.1,11.5 9,11.5" fill="none" stroke="#D8D8D8" stroke-width="1.1"/></svg>
<div class="t" style="left:77px;top:632px;color:#F5D10A;font-size:12.3px">Assets.Res.Assets.uiprefab</div>
<svg style="left:44px;top:650px;" width="6" height="11" viewBox="0 0 6 11"><path d="M0.7,0.8L5.3,5.5L0.7,10.2Z" fill="none" stroke="#E0E0E0" stroke-width="1.2"/></svg>
<svg style="left:56px;top:650px;" width="13" height="12" viewBox="0 0 13 12"><path d="M3.3,0.5C2.2,0.5 1.8,1 1.8,2.3V4.6C1.8,5.5 1.3,6 0.4,6C1.3,6 1.8,6.5 1.8,7.4V9.7C1.8,11 2.2,11.5 3.3,11.5" fill="none" stroke="#D8D8D8" stroke-width="1.1"/><path d="M9,0.5C10.1,0.5 10.5,1 10.5,2.3V4.6C10.5,5.5 11,6 11.9,6C11,6 10.5,6.5 10.5,7.4V9.7C10.5,11 10.1,11.5 9,11.5" fill="none" stroke="#D8D8D8" stroke-width="1.1"/></svg>
<div class="t" style="left:77px;top:649px;color:#F5D10A;font-size:12.3px">Assets.RUI</div>
<svg style="left:44px;top:667px;" width="6" height="11" viewBox="0 0 6 11"><path d="M0.7,0.8L5.3,5.5L0.7,10.2Z" fill="none" stroke="#E0E0E0" stroke-width="1.2"/></svg>
<svg style="left:56px;top:667px;" width="13" height="12" viewBox="0 0 13 12"><path d="M3.3,0.5C2.2,0.5 1.8,1 1.8,2.3V4.6C1.8,5.5 1.3,6 0.4,6C1.3,6 1.8,6.5 1.8,7.4V9.7C1.8,11 2.2,11.5 3.3,11.5" fill="none" stroke="#D8D8D8" stroke-width="1.1"/><path d="M9,0.5C10.1,0.5 10.5,1 10.5,2.3V4.6C10.5,5.5 11,6 11.9,6C11,6 10.5,6.5 10.5,7.4V9.7C10.5,11 10.1,11.5 9,11.5" fill="none" stroke="#D8D8D8" stroke-width="1.1"/></svg>
<div class="t" style="left:77px;top:666px;color:#F5D10A;font-size:12.3px">Assets.Scripts</div>
<svg style="left:44px;top:684px;" width="6" height="11" viewBox="0 0 6 11"><path d="M0.7,0.8L5.3,5.5L0.7,10.2Z" fill="none" stroke="#E0E0E0" stroke-width="1.2"/></svg>
<svg style="left:56px;top:684px;" width="13" height="12" viewBox="0 0 13 12"><path d="M3.3,0.5C2.2,0.5 1.8,1 1.8,2.3V4.6C1.8,5.5 1.3,6 0.4,6C1.3,6 1.8,6.5 1.8,7.4V9.7C1.8,11 2.2,11.5 3.3,11.5" fill="none" stroke="#D8D8D8" stroke-width="1.1"/><path d="M9,0.5C10.1,0.5 10.5,1 10.5,2.3V4.6C10.5,5.5 11,6 11.9,6C11,6 10.5,6.5 10.5,7.4V9.7C10.5,11 10.1,11.5 9,11.5" fill="none" stroke="#D8D8D8" stroke-width="1.1"/></svg>
<div class="t" style="left:77px;top:683px;color:#F5D10A;font-size:12.3px">Assets.Scripts.Asset</div>
<svg style="left:44px;top:701px;" width="6" height="11" viewBox="0 0 6 11"><path d="M0.7,0.8L5.3,5.5L0.7,10.2Z" fill="none" stroke="#E0E0E0" stroke-width="1.2"/></svg>
<svg style="left:56px;top:701px;" width="13" height="12" viewBox="0 0 13 12"><path d="M3.3,0.5C2.2,0.5 1.8,1 1.8,2.3V4.6C1.8,5.5 1.3,6 0.4,6C1.3,6 1.8,6.5 1.8,7.4V9.7C1.8,11 2.2,11.5 3.3,11.5" fill="none" stroke="#D8D8D8" stroke-width="1.1"/><path d="M9,0.5C10.1,0.5 10.5,1 10.5,2.3V4.6C10.5,5.5 11,6 11.9,6C11,6 10.5,6.5 10.5,7.4V9.7C10.5,11 10.1,11.5 9,11.5" fill="none" stroke="#D8D8D8" stroke-width="1.1"/></svg>
<div class="t" style="left:77px;top:700px;color:#F5D10A;font-size:12.3px">Assets.Scripts.BattleLoading</div>
<svg style="left:44px;top:718px;" width="6" height="11" viewBox="0 0 6 11"><path d="M0.7,0.8L5.3,5.5L0.7,10.2Z" fill="none" stroke="#E0E0E0" stroke-width="1.2"/></svg>
<svg style="left:56px;top:718px;" width="13" height="12" viewBox="0 0 13 12"><path d="M3.3,0.5C2.2,0.5 1.8,1 1.8,2.3V4.6C1.8,5.5 1.3,6 0.4,6C1.3,6 1.8,6.5 1.8,7.4V9.7C1.8,11 2.2,11.5 3.3,11.5" fill="none" stroke="#D8D8D8" stroke-width="1.1"/><path d="M9,0.5C10.1,0.5 10.5,1 10.5,2.3V4.6C10.5,5.5 11,6 11.9,6C11,6 10.5,6.5 10.5,7.4V9.7C10.5,11 10.1,11.5 9,11.5" fill="none" stroke="#D8D8D8" stroke-width="1.1"/></svg>
<div class="t" style="left:77px;top:717px;color:#F5D10A;font-size:12.3px">Assets.Scripts.Effect</div>
<svg style="left:44px;top:735px;" width="6" height="11" viewBox="0 0 6 11"><path d="M0.7,0.8L5.3,5.5L0.7,10.2Z" fill="none" stroke="#E0E0E0" stroke-width="1.2"/></svg>
<svg style="left:56px;top:735px;" width="13" height="12" viewBox="0 0 13 12"><path d="M3.3,0.5C2.2,0.5 1.8,1 1.8,2.3V4.6C1.8,5.5 1.3,6 0.4,6C1.3,6 1.8,6.5 1.8,7.4V9.7C1.8,11 2.2,11.5 3.3,11.5" fill="none" stroke="#D8D8D8" stroke-width="1.1"/><path d="M9,0.5C10.1,0.5 10.5,1 10.5,2.3V4.6C10.5,5.5 11,6 11.9,6C11,6 10.5,6.5 10.5,7.4V9.7C10.5,11 10.1,11.5 9,11.5" fill="none" stroke="#D8D8D8" stroke-width="1.1"/></svg>
<div class="t" style="left:77px;top:734px;color:#F5D10A;font-size:12.3px">Assets.Scripts.Effect.Level</div>
<svg style="left:44px;top:752px;" width="6" height="11" viewBox="0 0 6 11"><path d="M0.7,0.8L5.3,5.5L0.7,10.2Z" fill="none" stroke="#E0E0E0" stroke-width="1.2"/></svg>
<svg style="left:56px;top:752px;" width="13" height="12" viewBox="0 0 13 12"><path d="M3.3,0.5C2.2,0.5 1.8,1 1.8,2.3V4.6C1.8,5.5 1.3,6 0.4,6C1.3,6 1.8,6.5 1.8,7.4V9.7C1.8,11 2.2,11.5 3.3,11.5" fill="none" stroke="#D8D8D8" stroke-width="1.1"/><path d="M9,0.5C10.1,0.5 10.5,1 10.5,2.3V4.6C10.5,5.5 11,6 11.9,6C11,6 10.5,6.5 10.5,7.4V9.7C10.5,11 10.1,11.5 9,11.5" fill="none" stroke="#D8D8D8" stroke-width="1.1"/></svg>
<div class="t" style="left:77px;top:751px;color:#F5D10A;font-size:12.3px">Assets.Scripts.Effect.Level.Edit</div>
<svg style="left:44px;top:769px;" width="6" height="11" viewBox="0 0 6 11"><path d="M0.7,0.8L5.3,5.5L0.7,10.2Z" fill="none" stroke="#E0E0E0" stroke-width="1.2"/></svg>
<svg style="left:56px;top:769px;" width="13" height="12" viewBox="0 0 13 12"><path d="M3.3,0.5C2.2,0.5 1.8,1 1.8,2.3V4.6C1.8,5.5 1.3,6 0.4,6C1.3,6 1.8,6.5 1.8,7.4V9.7C1.8,11 2.2,11.5 3.3,11.5" fill="none" stroke="#D8D8D8" stroke-width="1.1"/><path d="M9,0.5C10.1,0.5 10.5,1 10.5,2.3V4.6C10.5,5.5 11,6 11.9,6C11,6 10.5,6.5 10.5,7.4V9.7C10.5,11 10.1,11.5 9,11.5" fill="none" stroke="#D8D8D8" stroke-width="1.1"/></svg>
<div class="t" style="left:77px;top:768px;color:#F5D10A;font-size:12.3px">Assets.Scripts.Fog</div>
<svg style="left:44px;top:786px;" width="6" height="11" viewBox="0 0 6 11"><path d="M0.7,0.8L5.3,5.5L0.7,10.2Z" fill="none" stroke="#E0E0E0" stroke-width="1.2"/></svg>
<svg style="left:56px;top:786px;" width="13" height="12" viewBox="0 0 13 12"><path d="M3.3,0.5C2.2,0.5 1.8,1 1.8,2.3V4.6C1.8,5.5 1.3,6 0.4,6C1.3,6 1.8,6.5 1.8,7.4V9.7C1.8,11 2.2,11.5 3.3,11.5" fill="none" stroke="#D8D8D8" stroke-width="1.1"/><path d="M9,0.5C10.1,0.5 10.5,1 10.5,2.3V4.6C10.5,5.5 11,6 11.9,6C11,6 10.5,6.5 10.5,7.4V9.7C10.5,11 10.1,11.5 9,11.5" fill="none" stroke="#D8D8D8" stroke-width="1.1"/></svg>
<div class="t" style="left:77px;top:785px;color:#F5D10A;font-size:12.3px">Assets.Scripts.Input</div>
<svg style="left:44px;top:803px;" width="6" height="11" viewBox="0 0 6 11"><path d="M0.7,0.8L5.3,5.5L0.7,10.2Z" fill="none" stroke="#E0E0E0" stroke-width="1.2"/></svg>
<svg style="left:56px;top:803px;" width="13" height="12" viewBox="0 0 13 12"><path d="M3.3,0.5C2.2,0.5 1.8,1 1.8,2.3V4.6C1.8,5.5 1.3,6 0.4,6C1.3,6 1.8,6.5 1.8,7.4V9.7C1.8,11 2.2,11.5 3.3,11.5" fill="none" stroke="#D8D8D8" stroke-width="1.1"/><path d="M9,0.5C10.1,0.5 10.5,1 10.5,2.3V4.6C10.5,5.5 11,6 11.9,6C11,6 10.5,6.5 10.5,7.4V9.7C10.5,11 10.1,11.5 9,11.5" fill="none" stroke="#D8D8D8" stroke-width="1.1"/></svg>
<div class="t" style="left:77px;top:802px;color:#F5D10A;font-size:12.3px">Assets.Scripts.PlatformRuntime</div>
<svg style="left:44px;top:820px;" width="6" height="11" viewBox="0 0 6 11"><path d="M0.7,0.8L5.3,5.5L0.7,10.2Z" fill="none" stroke="#E0E0E0" stroke-width="1.2"/></svg>
<svg style="left:56px;top:820px;" width="13" height="12" viewBox="0 0 13 12"><path d="M3.3,0.5C2.2,0.5 1.8,1 1.8,2.3V4.6C1.8,5.5 1.3,6 0.4,6C1.3,6 1.8,6.5 1.8,7.4V9.7C1.8,11 2.2,11.5 3.3,11.5" fill="none" stroke="#D8D8D8" stroke-width="1.1"/><path d="M9,0.5C10.1,0.5 10.5,1 10.5,2.3V4.6C10.5,5.5 11,6 11.9,6C11,6 10.5,6.5 10.5,7.4V9.7C10.5,11 10.1,11.5 9,11.5" fill="none" stroke="#D8D8D8" stroke-width="1.1"/></svg>
<div class="t" style="left:77px;top:819px;color:#F5D10A;font-size:12.3px">Assets.Scripts.QuickRuntime</div>
<svg style="left:44px;top:837px;" width="6" height="11" viewBox="0 0 6 11"><path d="M0.7,0.8L5.3,5.5L0.7,10.2Z" fill="none" stroke="#E0E0E0" stroke-width="1.2"/></svg>
<svg style="left:56px;top:837px;" width="13" height="12" viewBox="0 0 13 12"><path d="M3.3,0.5C2.2,0.5 1.8,1 1.8,2.3V4.6C1.8,5.5 1.3,6 0.4,6C1.3,6 1.8,6.5 1.8,7.4V9.7C1.8,11 2.2,11.5 3.3,11.5" fill="none" stroke="#D8D8D8" stroke-width="1.1"/><path d="M9,0.5C10.1,0.5 10.5,1 10.5,2.3V4.6C10.5,5.5 11,6 11.9,6C11,6 10.5,6.5 10.5,7.4V9.7C10.5,11 10.1,11.5 9,11.5" fill="none" stroke="#D8D8D8" stroke-width="1.1"/></svg>
<div class="t" style="left:77px;top:836px;color:#F5D10A;font-size:12.3px">Assets.Scripts.QuickRuntime2</div>
<svg style="left:44px;top:854px;" width="6" height="11" viewBox="0 0 6 11"><path d="M0.7,0.8L5.3,5.5L0.7,10.2Z" fill="none" stroke="#E0E0E0" stroke-width="1.2"/></svg>
<svg style="left:56px;top:854px;" width="13" height="12" viewBox="0 0 13 12"><path d="M3.3,0.5C2.2,0.5 1.8,1 1.8,2.3V4.6C1.8,5.5 1.3,6 0.4,6C1.3,6 1.8,6.5 1.8,7.4V9.7C1.8,11 2.2,11.5 3.3,11.5" fill="none" stroke="#D8D8D8" stroke-width="1.1"/><path d="M9,0.5C10.1,0.5 10.5,1 10.5,2.3V4.6C10.5,5.5 11,6 11.9,6C11,6 10.5,6.5 10.5,7.4V9.7C10.5,11 10.1,11.5 9,11.5" fill="none" stroke="#D8D8D8" stroke-width="1.1"/></svg>
<div class="t" style="left:77px;top:853px;color:#F5D10A;font-size:12.3px">Assets.Scripts.ResScripts.Res</div>
<svg style="left:44px;top:871px;" width="6" height="11" viewBox="0 0 6 11"><path d="M0.7,0.8L5.3,5.5L0.7,10.2Z" fill="none" stroke="#E0E0E0" stroke-width="1.2"/></svg>
<svg style="left:56px;top:871px;" width="13" height="12" viewBox="0 0 13 12"><path d="M3.3,0.5C2.2,0.5 1.8,1 1.8,2.3V4.6C1.8,5.5 1.3,6 0.4,6C1.3,6 1.8,6.5 1.8,7.4V9.7C1.8,11 2.2,11.5 3.3,11.5" fill="none" stroke="#D8D8D8" stroke-width="1.1"/><path d="M9,0.5C10.1,0.5 10.5,1 10.5,2.3V4.6C10.5,5.5 11,6 11.9,6C11,6 10.5,6.5 10.5,7.4V9.7C10.5,11 10.1,11.5 9,11.5" fill="none" stroke="#D8D8D8" stroke-width="1.1"/></svg>
<div class="t" style="left:77px;top:870px;color:#F5D10A;font-size:12.3px">Assets.Scripts.ResScripts.Rule</div>
<svg style="left:44px;top:888px;" width="6" height="11" viewBox="0 0 6 11"><path d="M0.7,0.8L5.3,5.5L0.7,10.2Z" fill="none" stroke="#E0E0E0" stroke-width="1.2"/></svg>
<svg style="left:56px;top:888px;" width="13" height="12" viewBox="0 0 13 12"><path d="M3.3,0.5C2.2,0.5 1.8,1 1.8,2.3V4.6C1.8,5.5 1.3,6 0.4,6C1.3,6 1.8,6.5 1.8,7.4V9.7C1.8,11 2.2,11.5 3.3,11.5" fill="none" stroke="#D8D8D8" stroke-width="1.1"/><path d="M9,0.5C10.1,0.5 10.5,1 10.5,2.3V4.6C10.5,5.5 11,6 11.9,6C11,6 10.5,6.5 10.5,7.4V9.7C10.5,11 10.1,11.5 9,11.5" fill="none" stroke="#D8D8D8" stroke-width="1.1"/></svg>
<div class="t" style="left:77px;top:887px;color:#F5D10A;font-size:12.3px">Assets.Scripts.SSJJProfiler</div>
<svg style="left:44px;top:905px;" width="6" height="11" viewBox="0 0 6 11"><path d="M0.7,0.8L5.3,5.5L0.7,10.2Z" fill="none" stroke="#E0E0E0" stroke-width="1.2"/></svg>
<svg style="left:56px;top:905px;" width="13" height="12" viewBox="0 0 13 12"><path d="M3.3,0.5C2.2,0.5 1.8,1 1.8,2.3V4.6C1.8,5.5 1.3,6 0.4,6C1.3,6 1.8,6.5 1.8,7.4V9.7C1.8,11 2.2,11.5 3.3,11.5" fill="none" stroke="#D8D8D8" stroke-width="1.1"/><path d="M9,0.5C10.1,0.5 10.5,1 10.5,2.3V4.6C10.5,5.5 11,6 11.9,6C11,6 10.5,6.5 10.5,7.4V9.7C10.5,11 10.1,11.5 9,11.5" fill="none" stroke="#D8D8D8" stroke-width="1.1"/></svg>
<div class="t" style="left:77px;top:904px;color:#F5D10A;font-size:12.3px">Assets.Scripts.Utility</div>
<svg style="left:44px;top:922px;" width="6" height="11" viewBox="0 0 6 11"><path d="M0.7,0.8L5.3,5.5L0.7,10.2Z" fill="none" stroke="#E0E0E0" stroke-width="1.2"/></svg>
<svg style="left:56px;top:922px;" width="13" height="12" viewBox="0 0 13 12"><path d="M3.3,0.5C2.2,0.5 1.8,1 1.8,2.3V4.6C1.8,5.5 1.3,6 0.4,6C1.3,6 1.8,6.5 1.8,7.4V9.7C1.8,11 2.2,11.5 3.3,11.5" fill="none" stroke="#D8D8D8" stroke-width="1.1"/><path d="M9,0.5C10.1,0.5 10.5,1 10.5,2.3V4.6C10.5,5.5 11,6 11.9,6C11,6 10.5,6.5 10.5,7.4V9.7C10.5,11 10.1,11.5 9,11.5" fill="none" stroke="#D8D8D8" stroke-width="1.1"/></svg>
<div class="t" style="left:77px;top:921px;color:#F5D10A;font-size:12.3px">Assets.Scripts.Weapon</div>
</div>
<div class="a" style="left:238px;top:85px;width:18px;height:923px;background:#3E3E42;"></div>
<svg style="left:242px;top:91px;" width="9" height="5" viewBox="0 0 9 5"><path d="M0,5L4.5,0L9,5Z" fill="#999"/></svg>
<div class="a" style="left:242px;top:119px;width:9px;height:94px;background:#686868;"></div>
<svg style="left:242px;top:996px;" width="10" height="6" viewBox="0 0 10 6"><path d="M0,0.5L5,5.5L10,0.5Z" fill="#999"/></svg>
<div class="a" style="left:7px;top:1008px;width:249px;height:18px;background:#3E3E42;"></div>
<svg style="left:13px;top:1012px;" width="6" height="10" viewBox="0 0 6 10"><path d="M5.5,0L0.5,5L5.5,10Z" fill="#999"/></svg>
<div class="a" style="left:24px;top:1012px;width:87px;height:9px;background:#686868;"></div>
<svg style="left:227px;top:1012px;" width="6" height="10" viewBox="0 0 6 10"><path d="M0.5,0L5.5,5L0.5,10Z" fill="#999"/></svg>
<div class="a" style="left:262px;top:61px;width:179px;height:25px;background:#3F3F46;"></div>
<div class="t" style="left:266px;top:65px;font-size:12.5px;color:#F1F1F1;">Assembly-CSharp (0.0.0.0)</div>
<svg style="left:426px;top:68px;" width="10" height="9" viewBox="0 0 10 9"><path d="M0.7,0.5L9.3,8.5M9.3,0.5L0.7,8.5" stroke="#8A8A8E" stroke-width="1.3"/></svg>
<div class="a" style="left:262px;top:84px;width:1652px;height:2px;background:#3F3F46;"></div>
<div class="a" style="left:262px;top:86px;width:1635px;height:667px;background:#1E1E1E;"></div>
<div class="a" style="left:262px;top:86px;width:17px;height:667px;background:#333333;"></div>
<div class="a" style="left:331px;top:86px;width:1566px;height:16px;background:#1E1E1E;border:2px solid #464646"></div>
<div class="a" style="left:331px;top:194px;width:1566px;height:1px;background:#C8C8C8;"></div>
<div class="ln" style="left:280px;width:35px;top:87px">4</div>
<div class="m" style="left:333px;top:87px"><span class="cm">// <span style="display:inline-block;width:14px;letter-spacing:0">时</span><span style="display:inline-block;width:14px;letter-spacing:0">间</span><span style="display:inline-block;width:14px;letter-spacing:0">戳</span><span style="display:inline-block;width:14px;letter-spacing:0">：</span> 67AD63EE (2025/2/13 11:15:58)</span></div>
<div class="ln" style="left:280px;width:35px;top:100px">5</div>
<div class="ln" style="left:280px;width:35px;top:116px">6</div>
<div class="m" style="left:333px;top:116px"><span class="kw">using</span> <span class="ns">System</span>;</div>
<div class="ln" style="left:280px;width:35px;top:132px">7</div>
<div class="m" style="left:333px;top:132px"><span class="kw">using</span> <span class="ns">System</span>.<span class="ns">Diagnostics</span>;</div>
<div class="ln" style="left:280px;width:35px;top:148px">8</div>
<div class="m" style="left:333px;top:148px"><span class="kw">using</span> <span class="ns">System</span>.<span class="ns">Reflection</span>;</div>
<div class="ln" style="left:280px;width:35px;top:164px">9</div>
<div class="m" style="left:333px;top:164px"><span class="kw">using</span> <span class="ns">System</span>.<span class="ns">Runtime</span>.<span class="ns">CompilerServices</span>;</div>
<div class="ln" style="left:280px;width:35px;top:180px">10</div>
<div class="m" style="left:333px;top:180px"><span class="kw">using</span> <span class="ns">System</span>.<span class="ns">Security</span>.<span class="ns">Permissions</span>;</div>
<div class="ln" style="left:280px;width:35px;top:193px">11</div>
<div class="ln" style="left:280px;width:35px;top:209px">12</div>
<div class="m" style="left:333px;top:209px">[<span class="kw">assembly</span>: <span class="ty">AssemblyVersion</span>(<span class="st">"0.0.0.0"</span>)]</div>
<div class="ln" style="left:280px;width:35px;top:225px">13</div>
<div class="m" style="left:333px;top:225px">[<span class="kw">assembly</span>: <span class="ty">CompilationRelaxations</span>(<span class="nm">8</span>)]</div>
<div class="ln" style="left:280px;width:35px;top:241px">14</div>
<div class="m" style="left:333px;top:241px">[<span class="kw">assembly</span>: <span class="ty">RuntimeCompatibility</span>(<span class="pr">WrapNonExceptionThrows</span> = <span class="kw">true</span>)]</div>
<div class="ln" style="left:280px;width:35px;top:257px">15</div>
<div class="m" style="left:333px;top:257px">[<span class="kw">assembly</span>: <span class="ty">Debuggable</span>(<span class="ty">DebuggableAttribute</span>.<span class="en">DebuggingModes</span>.<span class="lf">IgnoreSymbolStoreSequencePoints</span>)]</div>
<div class="ln" style="left:280px;width:35px;top:273px">16</div>
<div class="m" style="left:333px;top:273px">[<span class="kw">assembly</span>: <span class="ty">SecurityPermission</span>(<span class="en">SecurityAction</span>.<span class="lf">RequestMinimum</span>, <span class="pr">SkipVerification</span> = <span class="kw">true</span>)]</div>
<div class="ln" style="left:280px;width:35px;top:286px">17</div>
<div class="a" style="left:1897px;top:86px;width:17px;height:667px;background:#3E3E42;"></div>
<svg style="left:1901px;top:92px;" width="10" height="6" viewBox="0 0 10 6"><path d="M0,5.5L5,0.5L10,5.5Z" fill="#999"/></svg>
<div class="a" style="left:1901px;top:136px;width:9px;height:457px;background:#686868;"></div>
<svg style="left:1901px;top:741px;" width="10" height="6" viewBox="0 0 10 6"><path d="M0,0.5L5,5.5L10,0.5Z" fill="#999"/></svg>
<div class="a" style="left:262px;top:753px;width:1652px;height:17px;background:#3E3E42;"></div>
<div class="a" style="left:263px;top:754px;width:47px;height:16px;background:#1E1E1E;"></div>
<div class="a" style="left:311px;top:754px;width:11px;height:16px;background:#1E1E1E;"></div>
<div class="t" style="left:267px;top:754px;font-size:11.5px;color:#F1F1F1;line-height:17px">100 %</div>
<svg style="left:313px;top:760px;" width="7" height="4" viewBox="0 0 7 4"><path d="M0,0H7L3.5,3.5Z" fill="#999"/></svg>
<svg style="left:328px;top:756px;" width="6" height="10" viewBox="0 0 6 10"><path d="M5.5,0L0.5,5L5.5,10Z" fill="#5A5A5E"/></svg>
<svg style="left:1884px;top:756px;" width="6" height="10" viewBox="0 0 6 10"><path d="M0.5,0L5.5,5L0.5,10Z" fill="#5A5A5E"/></svg>
<div class="a" style="left:262px;top:776px;width:1652px;height:228px;background:#2D2D30;border:1px solid #3F3F46"></div>
<div class="t" style="left:267px;top:781px;font-size:12.6px;color:#F1F1F1;">C# 交互</div>
<svg style="left:322px;top:786px" width="1555" height="5"><defs><pattern id="g2" width="4" height="4" patternUnits="userSpaceOnUse"><rect x="0" y="0" width="1" height="1" fill="#4A4A4F"/><rect x="2" y="2" width="1" height="1" fill="#4A4A4F"/></pattern></defs><rect width="1555" height="5" fill="url(#g2)"/></svg>
<svg style="left:1881px;top:785px;" width="9" height="5" viewBox="0 0 9 5"><path d="M0,0H8L4,4Z" fill="#F1F1F1"/></svg>
<svg style="left:1897px;top:782px;" width="10" height="9" viewBox="0 0 10 9"><path d="M0.7,0.5L9.3,8.5M9.3,0.5L0.7,8.5" stroke="#F1F1F1" stroke-width="1.5"/></svg>
<svg style="left:271px;top:803px;" width="16" height="16" viewBox="0 0 16 16"><path d="M4.5,3.2A6.3,6.3 0 1 0 11.5,3.2" fill="none" stroke="#4A9FE8" stroke-width="1.4"/><path d="M11.5,0.5V3.6H14.6" fill="none" stroke="#4A9FE8" stroke-width="1.3"/></svg>
<svg style="left:294px;top:803px;" width="15" height="16" viewBox="0 0 15 16"><path d="M0.5,0.5L5,5M5,0.5L0.5,5" stroke="#E04050" stroke-width="1.2"/><path d="M7,1.5H14M7,4.5H14M7,7.5H14M0,11.5H14M0,14.5H14" stroke="#E8E8E8" stroke-width="1"/></svg>
<svg style="left:317px;top:803px;" width="11" height="15" viewBox="0 0 11 15"><path d="M5.5,15V1M0.5,6L5.5,1L10.5,6" fill="none" stroke="#6A6A6A" stroke-width="1.2"/></svg>
<svg style="left:339px;top:803px;" width="11" height="15" viewBox="0 0 11 15"><path d="M5.5,0V14M0.5,9L5.5,14L10.5,9" fill="none" stroke="#6A6A6A" stroke-width="1.2"/></svg>
<div class="a" style="left:359px;top:803px;width:1px;height:17px;background:#48484C;"></div>
<svg style="left:368px;top:803px;" width="14" height="16" viewBox="0 0 14 16"><path d="M0.7,0.7H10.5L13.3,3.5V15.3H0.7Z" fill="#2A3A4E" stroke="#4A9FE8" stroke-width="1.4"/><rect x="3.5" y="1" width="6.5" height="4" fill="#1F2530" stroke="#4A9FE8" stroke-width="1.2"/><rect x="3" y="9" width="8" height="6" fill="#1F2530" stroke="#4A9FE8" stroke-width="1.2"/></svg>
<div class="a" style="left:386px;top:800px;width:22px;height:22px;background:#1E1E1E;border:1px solid #3F3F46"></div>
<div class="t" style="left:390px;top:802px;font-size:8px;color:#F1F1F1;line-height:9px;font-weight:bold">ab</div>
<div class="t" style="left:390px;top:809px;font-size:8px;color:#F1F1F1;line-height:9px;font-weight:bold">c</div>
<svg style="left:396px;top:808px;" width="10" height="10" viewBox="0 0 10 10"><path d="M2,0.7H8.5V6.5H1.5M4,4L1.5,6.5L4,9" fill="none" stroke="#4A9FE8" stroke-width="1.2"/></svg>
<div class="a" style="left:263px;top:822px;width:1634px;height:164px;background:#1E1E1E;"></div>
<div class="ln" style="left:263px;width:35px;top:823px">1</div>
<div class="m" style="left:317px;top:823px">Microsoft (R) Roslyn C# Compiler version 4.1000.24.27302</div>
<div class="ln" style="left:263px;width:35px;top:839px">2</div>
<div class="m" style="left:317px;top:839px"><span style="display:inline-block;width:14px;letter-spacing:0">从</span> 'CSharpInteractive.rsp' <span style="display:inline-block;width:14px;letter-spacing:0">加</span><span style="display:inline-block;width:14px;letter-spacing:0">载</span><span style="display:inline-block;width:14px;letter-spacing:0">上</span><span style="display:inline-block;width:14px;letter-spacing:0">下</span><span style="display:inline-block;width:14px;letter-spacing:0">文</span><span style="display:inline-block;width:14px;letter-spacing:0">。</span></div>
<div class="ln" style="left:263px;width:35px;top:855px">3</div>
<div class="m" style="left:317px;top:855px"><span style="display:inline-block;width:14px;letter-spacing:0">键</span><span style="display:inline-block;width:14px;letter-spacing:0">入</span> “#help” <span style="display:inline-block;width:14px;letter-spacing:0">以</span><span style="display:inline-block;width:14px;letter-spacing:0">获</span><span style="display:inline-block;width:14px;letter-spacing:0">取</span><span style="display:inline-block;width:14px;letter-spacing:0">更</span><span style="display:inline-block;width:14px;letter-spacing:0">多</span><span style="display:inline-block;width:14px;letter-spacing:0">信</span><span style="display:inline-block;width:14px;letter-spacing:0">息</span><span style="display:inline-block;width:14px;letter-spacing:0">。</span></div>
<div class="a" style="left:315px;top:870px;width:1582px;height:16px;background:#1E1E1E;border:2px solid #464646"></div>
<div class="ln" style="left:263px;width:35px;top:871px;color:#D7A98C">1</div>
<svg style="left:318px;top:874px;" width="6" height="9" viewBox="0 0 6 9"><path d="M0.5,0.5L5,4.5L0.5,8.5" fill="none" stroke="#DCDCDC" stroke-width="1"/></svg>
<div class="a" style="left:1897px;top:822px;width:17px;height:164px;background:#3E3E42;"></div>
<svg style="left:1901px;top:827px;" width="10" height="6" viewBox="0 0 10 6"><path d="M0,5.5L5,0.5L10,5.5Z" fill="#999"/></svg>
<div class="a" style="left:1901px;top:839px;width:9px;height:101px;background:#686868;"></div>
<svg style="left:1901px;top:974px;" width="10" height="6" viewBox="0 0 10 6"><path d="M0,0.5L5,5.5L10,0.5Z" fill="#999"/></svg>
<div class="a" style="left:263px;top:986px;width:1651px;height:17px;background:#3E3E42;"></div>
<div class="a" style="left:264px;top:987px;width:46px;height:16px;background:#1E1E1E;"></div>
<div class="a" style="left:311px;top:987px;width:11px;height:16px;background:#1E1E1E;"></div>
<div class="t" style="left:267px;top:987px;font-size:11.5px;color:#F1F1F1;line-height:17px">100 %</div>
<svg style="left:313px;top:993px;" width="7" height="4" viewBox="0 0 7 4"><path d="M0,0H7L3.5,3.5Z" fill="#999"/></svg>
<svg style="left:328px;top:989px;" width="6" height="10" viewBox="0 0 6 10"><path d="M5.5,0L0.5,5L5.5,10Z" fill="#5A5A5E"/></svg>
<svg style="left:1884px;top:989px;" width="6" height="10" viewBox="0 0 6 10"><path d="M0.5,0L5.5,5L0.5,10Z" fill="#5A5A5E"/></svg>
<div class="t" style="left:267px;top:1007px;font-size:12.4px;color:#F1F1F1;">搜索</div>
<div class="a" style="left:296px;top:1003px;width:56px;height:23px;background:#252526;border:1px solid #3F3F46;border-top:none"></div>
<div class="t" style="left:302px;top:1007px;font-size:12.6px;color:#3399FF;">C# 交互</div>
<div class="a" style="left:0px;top:1028px;width:1919px;height:4px;background:#262628;"></div>
<div class="a" style="left:0px;top:1032px;width:1919px;height:47px;background:#EEEEEE;"></div>
<svg style="left:21px;top:1045px;" width="24" height="24" viewBox="0 0 24 24"><defs><linearGradient id="wg" x1="0" y1="0" x2="1" y2="1"><stop offset="0" stop-color="#4DC3FF"/><stop offset="1" stop-color="#0067C0"/></linearGradient></defs><path d="M0,0H10.7V10.7H0ZM12,0H23V10.7H12ZM0,12H10.7V23H0ZM12,12H23V23H12Z" fill="url(#wg)"/></svg>
<div class="a" style="left:57px;top:1036px;width:40px;height:40px;background:#E8AFAC;border-radius:6px"></div>
<div class="a" style="left:65px;top:1044px;width:24px;height:24px;background:#FFFFFF;border-radius:5px"></div>
<svg style="left:67px;top:1046px;" width="20" height="21" viewBox="0 0 20 21"><ellipse cx="10" cy="6.5" rx="5.3" ry="6" fill="#111"/><path d="M4.6,8C2.5,10 1.5,13 2.2,16C3,15 3.8,14 4.2,13.5C4.5,17 6.5,19.5 10,19.5C13.5,19.5 15.5,17 15.8,13.5C16.2,14 17,15 17.8,16C18.5,13 17.5,10 15.4,8Z" fill="#111"/><ellipse cx="10" cy="14" rx="4.8" ry="5" fill="#fff"/><path d="M4.2,9.2C7,10.5 13,10.5 15.8,9.2L16,11C13,12 7,12 4,11Z" fill="#E8251E"/><path d="M6,10.8L6.5,14.5L9,13.5L8.5,11.2Z" fill="#E8251E"/><ellipse cx="10" cy="7.6" rx="3.2" ry="1.3" fill="#F7B500"/><ellipse cx="8.2" cy="4.6" rx="1" ry="1.4" fill="#fff"/><ellipse cx="11.8" cy="4.6" rx="1" ry="1.4" fill="#fff"/><ellipse cx="6.5" cy="19.6" rx="2.8" ry="1" fill="#F7B500"/><ellipse cx="13.5" cy="19.6" rx="2.8" ry="1" fill="#F7B500"/></svg>
<div class="a" style="left:74px;top:1072px;width:6px;height:3px;background:#C42020;border-radius:2px"></div>
<svg style="left:109px;top:1044px;" width="25" height="25" viewBox="0 0 25 25"><defs><linearGradient id="eg1" x1="0" y1="0.2" x2="1" y2="0.7"><stop offset="0" stop-color="#2AAFEA"/><stop offset="0.55" stop-color="#2FC5C8"/><stop offset="1" stop-color="#5FD84F"/></linearGradient><linearGradient id="eg2" x1="0" y1="0" x2="0.6" y2="1"><stop offset="0" stop-color="#1E9BE6"/><stop offset="1" stop-color="#0B57A8"/></linearGradient></defs><circle cx="12.5" cy="12" r="12" fill="url(#eg1)"/><path d="M0.5,12C1.5,6 6,4 10,4.5C13,5 14,7.5 12.5,9C11,10.5 10.5,12.5 11,14.5C12,18 15.5,20 19.5,19.5C21,19.3 22.3,18.8 23.3,18C21.5,21.5 17.5,24 12.5,24C6,24 0.5,19 0.5,12Z" fill="url(#eg2)"/><path d="M12.5,9.2C14.5,8.2 16.5,9.8 16,12C15.7,14 17.5,16.5 20.5,16.8C21.8,16.9 23,16.5 23.6,16.2C23.5,17 23.4,17.5 23.3,18C21.5,19.5 18,20.2 15,19C12,17.8 10.6,15 11,12.5C11.2,10.8 11.8,9.6 12.5,9.2Z" fill="#EEEEEE"/></svg>
<div class="a" style="left:118px;top:1072px;width:6px;height:3px;background:#808080;border-radius:2px"></div>
<svg style="left:154px;top:1045px;" width="20" height="20" viewBox="0 0 20 20"><rect x="6.8" y="0.8" width="12" height="12" fill="#3C3C3C" stroke="#9A9A9A" stroke-width="1.6"/><rect x="3.8" y="3.8" width="12" height="12" fill="#3C3C3C" stroke="#9A9A9A" stroke-width="1.6"/><rect x="0.8" y="6.8" width="12" height="12" fill="#3C3C3C" stroke="#9A9A9A" stroke-width="1.6"/></svg>
<div class="a" style="left:162px;top:1072px;width:6px;height:3px;background:#808080;border-radius:2px"></div>
<svg style="left:1671px;top:1052px;" width="12" height="7" viewBox="0 0 12 7"><path d="M0.7,6.3L6,1L11.3,6.3" fill="none" stroke="#1A1A1A" stroke-width="1.3"/></svg>
<svg style="left:1702px;top:1048px;" width="17" height="17" viewBox="0 0 17 17"><ellipse cx="7" cy="5" rx="4.3" ry="5" fill="#111"/><path d="M3,7C1.5,9 0.8,11 1,13.5L2.5,12.5C3,15 4.5,16 7,16C9.5,16 11,15 11.5,12.5L13,13.5C13.2,11 12.5,9 11,7Z" fill="#111"/><ellipse cx="7" cy="12" rx="3.6" ry="3.8" fill="#fff"/><path d="M2.8,7.6C5,8.8 9,8.8 11.2,7.6L11.4,9.4C9,10.4 5,10.4 2.6,9.4Z" fill="#F0407A"/><path d="M9.5,0.5L12,2L10.5,3.5Z" fill="#F0407A"/><ellipse cx="7" cy="5.6" rx="2.4" ry="1" fill="#F5B000"/><ellipse cx="4.5" cy="15.8" rx="2" ry="0.8" fill="#F5B000"/><circle cx="12.3" cy="12.5" r="3.6" fill="#1E9BFF"/><circle cx="11" cy="12.5" r="0.5" fill="#fff"/><circle cx="13.5" cy="12.5" r="0.5" fill="#fff"/></svg>
<div class="t" style="left:1733px;top:1048px;font-size:14.5px;color:#1A1A1A;line-height:18px;font-weight:300">英</div>
<svg style="left:1764px;top:1049px;" width="18" height="13" viewBox="0 0 18 13"><path d="M1,5C5,0.8 13,0.8 17,5M3.5,7.6C6.5,4.8 11.5,4.8 14.5,7.6M6.2,10C7.8,8.6 10.2,8.6 11.8,10" fill="none" stroke="#1A1A1A" stroke-width="1.5"/><circle cx="9" cy="11.8" r="1.2" fill="#1A1A1A"/></svg>
<svg style="left:1789px;top:1048px;" width="17" height="15" viewBox="0 0 17 15"><path d="M0.7,5H3.5L7.5,1.2V13.8L3.5,10H0.7Z" fill="none" stroke="#1A1A1A" stroke-width="1.2"/><path d="M10,4.5C11,6 11,9 10,10.5M12.3,2.8C14,5 14,10 12.3,12.2M14.6,1C17,4 17,11 14.6,14" fill="none" stroke="#1A1A1A" stroke-width="1.2"/></svg>
<svg style="left:1812px;top:1047px;" width="18" height="15" viewBox="0 0 18 15"><rect x="1.6" y="4.6" width="12.8" height="8.8" rx="1.6" fill="none" stroke="#1A1A1A" stroke-width="1.5"/><rect x="3.5" y="6.5" width="9" height="5" fill="#1A1A1A"/><rect x="15" y="7" width="2" height="4" rx="0.8" fill="#1A1A1A"/><path d="M5.5,0.5L3,5.5H6L4.5,9" fill="#EEEEEE" stroke="#1A1A1A" stroke-width="1.2"/></svg>
<div class="t" style="left:1830px;top:1042px;width:71px;text-align:right;font-size:12px;line-height:14px;color:#1A1A1A">19:19</div>
<div class="t" style="left:1830px;top:1058px;width:71px;text-align:right;font-size:12px;line-height:14px;color:#1A1A1A">2025/2/14</div>
</body></html>
